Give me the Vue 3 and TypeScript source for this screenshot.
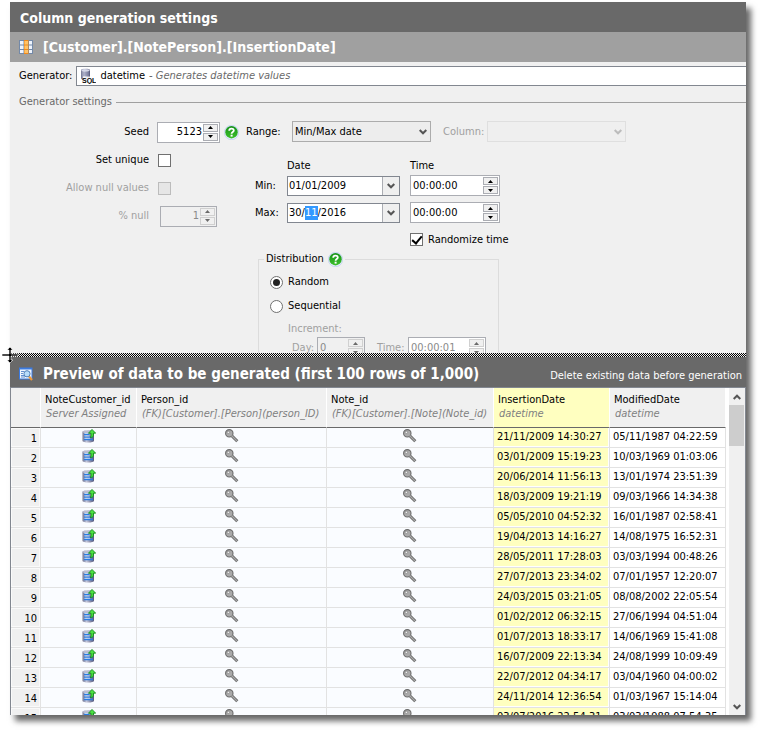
<script setup lang="ts">
import { onMounted, ref } from 'vue'

interface PreviewRow {
  inserted: string
  modified: string
}

interface Column {
  name: string
  type: string
  active?: boolean
}

const seed = ref('5123')
const nullPercent = ref('1')
const range = ref('Min/Max date')
const unique = ref(false)
const allowNull = ref(false)
const minDate = ref('01/01/2009')
const maxDate = ref('30/11/2016')
const minTime = ref('00:00:00')
const maxTime = ref('00:00:00')
const randomizeTime = ref(true)
const distribution = ref('random')
const maxDateInput = ref<HTMLInputElement | null>(null)

const columns: Column[] = [
  { name: 'NoteCustomer_id', type: 'Server Assigned' },
  { name: 'Person_id', type: '(FK)[Customer].[Person](person_ID)' },
  { name: 'Note_id', type: '(FK)[Customer].[Note](Note_id)' },
  { name: 'InsertionDate', type: 'datetime', active: true },
  { name: 'ModifiedDate', type: 'datetime' },
]

const rows: PreviewRow[] = [
  { inserted: '21/11/2009 14:30:27', modified: '05/11/1987 04:22:59' },
  { inserted: '03/01/2009 15:19:23', modified: '10/03/1969 01:03:06' },
  { inserted: '20/06/2014 11:56:13', modified: '13/01/1974 23:51:39' },
  { inserted: '18/03/2009 19:21:19', modified: '09/03/1966 14:34:38' },
  { inserted: '05/05/2010 04:52:32', modified: '16/01/1987 02:58:41' },
  { inserted: '19/04/2013 14:16:27', modified: '14/08/1975 16:52:31' },
  { inserted: '28/05/2011 17:28:03', modified: '03/03/1994 00:48:26' },
  { inserted: '27/07/2013 23:34:02', modified: '07/01/1957 12:20:07' },
  { inserted: '24/03/2015 03:21:05', modified: '08/08/2002 22:05:54' },
  { inserted: '01/02/2012 06:32:15', modified: '27/06/1994 04:51:04' },
  { inserted: '01/07/2013 18:33:17', modified: '14/06/1969 15:41:08' },
  { inserted: '16/07/2009 22:13:34', modified: '24/08/1999 10:09:49' },
  { inserted: '22/07/2012 04:34:17', modified: '03/04/1960 04:00:02' },
  { inserted: '24/11/2014 12:36:54', modified: '01/03/1967 15:14:04' },
  { inserted: '03/07/2016 22:54:31', modified: '03/03/1988 07:54:35' },
]

// The month part of the maximum date is the one being edited.
onMounted(() => {
  maxDateInput.value?.focus({ preventScroll: true })
  maxDateInput.value?.setSelectionRange(3, 5)
})
</script>

<template>
  <svg class="symbols" aria-hidden="true">
    <defs>
      <linearGradient id="drum" x1="0" x2="1" y1="0" y2="0">
        <stop offset="0" stop-color="#6f7391" />
        <stop offset="0.35" stop-color="#c3c6da" />
        <stop offset="1" stop-color="#55587a" />
      </linearGradient>
      <linearGradient id="green" x1="0" x2="0" y1="0" y2="1">
        <stop offset="0" stop-color="#17921a" />
        <stop offset="1" stop-color="#3cc02a" />
      </linearGradient>
    </defs>
    <symbol id="help" viewBox="0 0 15 15">
      <circle cx="7.5" cy="7.5" r="7.2" fill="#e4ecfb" stroke="#b4c8ee" stroke-width="0.6" />
      <circle cx="7.5" cy="7.2" r="6.2" fill="url(#green)" />
      <path d="M5.2 5.8C5.2 3 9.8 3 9.8 5.5C9.8 7.1 7.6 7 7.6 8.7" fill="none" stroke="#fff" stroke-width="1.8" />
      <rect x="6.6" y="9.7" width="2" height="1.9" fill="#fff" />
    </symbol>
    <symbol id="chevron" viewBox="0 0 8 6">
      <path d="M0.7 1L4 4.3L7.3 1" fill="none" stroke="currentColor" stroke-width="2" />
    </symbol>
    <symbol id="up" viewBox="0 0 5 3"><path d="M0 3L2.5 0L5 3Z" fill="currentColor" /></symbol>
    <symbol id="down" viewBox="0 0 5 3"><path d="M0 0L2.5 3L5 0Z" fill="currentColor" /></symbol>
    <symbol id="server" viewBox="0 0 14 14">
      <path d="M0.5 2.8C0.5 1 12 1 12 2.8V11.8C12 14.2 0.5 14.2 0.5 11.8Z" fill="url(#drum)" />
      <ellipse cx="6" cy="2.9" rx="5.2" ry="1.3" fill="#b9bdd2" />
      <path d="M2 5.5H7.5M2 8H11M2 10.5H11" stroke="#2a7be0" stroke-width="1.3" />
      <path d="M2.5 4.5H6.5M2.5 7H7.5M2.5 9.3H8" stroke="#cfe6ff" stroke-width="0.7" />
      <path d="M10 0.4L13.7 4.2H11.4V6.5C11.4 8.2 9.6 8.6 8 8.4C9 7.8 9 7.2 9 6.3V4.2H6.5Z" fill="#4ce043" stroke="#0f8716" stroke-width="0.8" />
    </symbol>
    <symbol id="key" viewBox="0 0 14 14">
      <path d="M6 6L12.3 12.3M9.5 11.2L11 9.8" fill="none" stroke="#666" stroke-width="3" />
      <circle cx="4.3" cy="4.3" r="3.7" fill="#aaa" stroke="#6c6c6c" stroke-width="1.1" />
      <path d="M6.5 6.5L12 12" stroke="#a9a9a9" stroke-width="1.3" />
      <circle cx="3.4" cy="3.4" r="1.2" fill="#eee" stroke="#777" stroke-width="0.6" />
    </symbol>
  </svg>

  <div class="page">
    <main class="window">
      <section class="pane">
        <header class="bar"><h1>Column generation settings</h1></header>
        <div class="bar sub">
          <svg class="bar-icon" viewBox="0 0 14 14" aria-hidden="true">
            <rect width="14" height="14" fill="#7389a8" />
            <path d="M1 1H4.5V4.5H1ZM1 5.5H4.5V9H1ZM1 10H4.5V13H1ZM10 1H13V4.5H10ZM10 5.5H13V9H10ZM10 10H13V13H10Z" fill="#eef3fc" />
            <path d="M5 0H9.5V14H5Z" fill="#f08a1c" />
            <path d="M5.5 1H9V4.5H5.5ZM5.5 5.5H9V9H5.5ZM5.5 10H9V13H5.5Z" fill="#ffc368" />
          </svg>
          <h2>[Customer].[NotePerson].[InsertionDate]</h2>
        </div>

        <form class="settings" @submit.prevent>
          <div class="generator">
            <label for="generator">Generator:</label>
            <button id="generator" type="button" class="generator-box" aria-haspopup="listbox">
              <svg class="sql-icon" viewBox="0 0 16 16" aria-hidden="true">
                <path d="M1 2.2C1 0.4 10 0.4 10 2.2V10.5C10 12.3 1 12.3 1 10.5Z" fill="url(#drum)" />
                <ellipse cx="5.5" cy="2.4" rx="4" ry="1.1" fill="#d5d7e8" />
                <path d="M3 5H9M3 7H9" stroke="#8a8eb0" stroke-width="0.7" />
                <rect x="3" y="8.5" width="13" height="7.5" fill="#fff" opacity="0.85" />
                <text x="2" y="15.4" class="sql-text">SQL</text>
              </svg>
              <span>datetime</span>
              <em>- Generates datetime values</em>
            </button>
          </div>

          <div class="group-title"><span>Generator settings</span></div>

          <div class="fields">
            <div class="left">
              <label for="seed">Seed</label>
              <div class="with-help">
                <div class="spin seed">
                  <input id="seed" v-model="seed" type="text" />
                  <div class="arrows">
                    <button type="button" aria-label="Increase seed"><svg><use href="#up" /></svg></button>
                    <button type="button" aria-label="Decrease seed"><svg><use href="#down" /></svg></button>
                  </div>
                </div>
                <svg class="help" aria-hidden="true"><use href="#help" /></svg>
              </div>
              <label for="unique">Set unique</label>
              <input id="unique" v-model="unique" type="checkbox" />
              <label for="allow-null" class="off">Allow null values</label>
              <input id="allow-null" v-model="allowNull" type="checkbox" disabled />
              <label for="null-percent" class="off">% null</label>
              <div class="spin percent disabled">
                <input id="null-percent" v-model="nullPercent" type="text" disabled />
                <div class="arrows">
                  <button type="button" disabled aria-label="Increase null percent"><svg><use href="#up" /></svg></button>
                  <button type="button" disabled aria-label="Decrease null percent"><svg><use href="#down" /></svg></button>
                </div>
              </div>
            </div>

            <div class="right">
              <div class="range">
                <label for="range">Range:</label>
                <div class="select">
                  <select id="range" v-model="range"><option>Min/Max date</option></select>
                  <svg><use href="#chevron" /></svg>
                </div>
                <label for="column" class="off">Column:</label>
                <div class="select disabled">
                  <select id="column" disabled><option></option></select>
                  <svg><use href="#chevron" /></svg>
                </div>
              </div>

              <div class="limits">
                <span class="date-head">Date</span>
                <span>Time</span>
                <label for="min-date">Min:</label>
                <div class="date">
                  <input id="min-date" v-model="minDate" type="text" />
                  <button type="button" aria-label="Pick minimum date"><svg><use href="#chevron" /></svg></button>
                </div>
                <div class="spin time">
                  <input v-model="minTime" type="text" aria-label="Minimum time" />
                  <div class="arrows">
                    <button type="button" aria-label="Later minimum time"><svg><use href="#up" /></svg></button>
                    <button type="button" aria-label="Earlier minimum time"><svg><use href="#down" /></svg></button>
                  </div>
                </div>
                <label for="max-date">Max:</label>
                <div class="date">
                  <input id="max-date" ref="maxDateInput" v-model="maxDate" type="text" />
                  <button type="button" aria-label="Pick maximum date"><svg><use href="#chevron" /></svg></button>
                </div>
                <div class="spin time">
                  <input v-model="maxTime" type="text" aria-label="Maximum time" />
                  <div class="arrows">
                    <button type="button" aria-label="Later maximum time"><svg><use href="#up" /></svg></button>
                    <button type="button" aria-label="Earlier maximum time"><svg><use href="#down" /></svg></button>
                  </div>
                </div>
                <label class="choice randomize">
                  <input v-model="randomizeTime" type="checkbox" />
                  <span>Randomize time</span>
                </label>
              </div>

              <fieldset>
                <legend>
                  <span>Distribution</span>
                  <svg class="help" aria-hidden="true"><use href="#help" /></svg>
                </legend>
                <label class="choice">
                  <input v-model="distribution" type="radio" name="distribution" value="random" />
                  <span>Random</span>
                </label>
                <label class="choice">
                  <input v-model="distribution" type="radio" name="distribution" value="sequential" />
                  <span>Sequential</span>
                </label>
                <div class="increment off">Increment:</div>
                <div class="increment-row off">
                  <label for="day">Day:</label>
                  <div class="spin day disabled">
                    <input id="day" type="text" value="0" disabled />
                    <div class="arrows">
                      <button type="button" disabled aria-label="More days"><svg><use href="#up" /></svg></button>
                      <button type="button" disabled aria-label="Fewer days"><svg><use href="#down" /></svg></button>
                    </div>
                  </div>
                  <label for="step-time">Time:</label>
                  <div class="spin step disabled">
                    <input id="step-time" type="text" value="00:00:01" disabled />
                    <div class="arrows">
                      <button type="button" disabled aria-label="More time"><svg><use href="#up" /></svg></button>
                      <button type="button" disabled aria-label="Less time"><svg><use href="#down" /></svg></button>
                    </div>
                  </div>
                </div>
              </fieldset>
            </div>
          </div>
        </form>
      </section>

      <section class="pane">
        <div class="splitter" role="separator">
          <svg class="resize" viewBox="0 0 17 17" aria-hidden="true">
            <path d="M8 0L11 3H9V7H16V9H9V13H11L8 16L5 13H7V9H0V7H7V3H5Z" fill="#000" stroke="#fff" stroke-width="0.6" />
          </svg>
        </div>
        <header class="bar preview">
          <svg class="bar-icon" viewBox="0 0 14 14" aria-hidden="true">
            <rect width="13.5" height="12" y="0.5" fill="#3c7be0" />
            <rect x="1" y="2.5" width="11.5" height="9" fill="#eef5ff" />
            <path d="M2 4.5H5M2 6.5H4M2 8.5H5M2 10H6" stroke="#6590cf" stroke-width="1" />
            <path d="M10 9.5L13 13" stroke="#ef9a38" stroke-width="2.2" />
            <circle cx="8" cy="6.8" r="3.1" fill="#b8dcfa" stroke="#4e7fb8" stroke-width="1" />
          </svg>
          <h2>Preview of data to be generated (first 100 rows of 1,000)</h2>
          <button type="button" class="delete">Delete existing data before generation</button>
        </header>

        <div class="grid">
          <div class="table-area">
            <table>
              <colgroup>
                <col class="c-num" /><col class="c-note" /><col class="c-person" />
                <col class="c-id" /><col class="c-date" /><col class="c-date" />
              </colgroup>
              <thead>
                <tr>
                  <td></td>
                  <th v-for="column in columns" :key="column.name" scope="col" :class="{ active: column.active }">
                    {{ column.name }}<em>{{ column.type }}</em>
                  </th>
                </tr>
              </thead>
              <tbody>
                <tr v-for="(row, index) in rows" :key="index">
                  <th scope="row">{{ index + 1 }}</th>
                  <td class="auto"><svg aria-label="Server assigned"><use href="#server" /></svg></td>
                  <td class="auto"><svg aria-label="Foreign key"><use href="#key" /></svg></td>
                  <td class="auto"><svg aria-label="Foreign key"><use href="#key" /></svg></td>
                  <td class="active">{{ row.inserted }}</td>
                  <td>{{ row.modified }}</td>
                </tr>
              </tbody>
            </table>
          </div>
          <div class="scroll">
            <button type="button" aria-label="Scroll up"><svg class="flip"><use href="#chevron" /></svg></button>
            <div class="track"><div class="thumb"></div></div>
            <button type="button" aria-label="Scroll down"><svg><use href="#chevron" /></svg></button>
          </div>
        </div>
      </section>
    </main>
  </div>
</template>

<style>
body {
  background: #fff;
}
</style>

<style scoped>
* {
  box-sizing: border-box;
}

.symbols {
  position: absolute;
  width: 0;
  height: 0;
}

.page {
  height: 100vh;
  padding: 2px 14px 15px 10px;
  overflow: hidden;
}

.window {
  display: grid;
  grid-template-rows: minmax(0, 351fr) minmax(0, 362fr);
  height: 100%;
  background: #f0f0f0;
  box-shadow: 5px 6px 6px rgba(0, 0, 0, 0.6);
  color: #000;
  font: 11px/14px "DejaVu Sans Condensed", "Noto Sans", sans-serif;
}

.pane {
  display: flex;
  flex-direction: column;
  min-height: 0;
}

.pane:first-child {
  overflow: hidden;
}

button,
input,
select {
  margin: 0;
  padding: 0;
  border: 0;
  border-radius: 0;
  background: none;
  color: inherit;
  font: inherit;
  outline: none;
}

.bar {
  display: flex;
  flex: none;
  align-items: center;
  gap: 10px;
  height: 30px;
  padding: 2px 4px 0 10px;
  background: #696969;
  color: #fff;
}

.bar.sub {
  padding-top: 0;
  padding-left: 9px;
  background: #a0a0a0;
}

.bar.preview {
  padding-top: 4px;
  padding-left: 9px;
}

.bar h1,
.bar h2 {
  margin: 0;
  font-size: 14px;
  font-weight: bold;
  line-height: 20px;
  white-space: nowrap;
}

.bar.preview h2 {
  font-size: 15px;
}

.bar-icon {
  flex: none;
  width: 14px;
  height: 14px;
}

.delete {
  margin-left: auto;
  padding-top: 4px;
  white-space: nowrap;
}

.settings {
  padding-top: 4px;
}

.generator {
  display: flex;
  align-items: center;
  gap: 4px;
  padding-left: 9px;
}

.generator-box {
  display: flex;
  flex: 1;
  align-items: center;
  gap: 4px;
  height: 20px;
  padding-left: 3px;
  border: 1px solid #828790;
  border-right: 0;
  background: #fff;
  white-space: pre;
}

.generator-box em {
  color: #696969;
}

.sql-icon {
  width: 16px;
  height: 16px;
}

.sql-text {
  font: bold 7px "Liberation Sans", sans-serif;
}

.group-title {
  display: flex;
  align-items: center;
  gap: 4px;
  margin: 9px 0 12px;
  padding-left: 9px;
  color: #696969;
}

.group-title::after {
  flex: 1;
  height: 1px;
  background: #a0a0a0;
  content: "";
}

.fields {
  display: flex;
}

.left {
  display: grid;
  flex: none;
  grid-template-columns: 139px 89px;
  grid-auto-rows: 28px;
  align-items: center;
  align-self: flex-start;
  column-gap: 8px;
  margin-top: -3px;
}

.left label {
  text-align: right;
}

.left > input[type="checkbox"] {
  margin-left: 1px;
}

.with-help {
  display: flex;
  align-items: center;
  gap: 4px;
}

.help {
  flex: none;
  width: 15px;
  height: 15px;
}

.off {
  color: #a0a0a0;
}

.spin {
  display: flex;
  height: 21px;
  padding: 1px;
  border: 1px solid #abadb3;
  background: #fff;
}

.spin input {
  flex: 1;
  width: 0;
  padding-left: 1px;
}

.spin.disabled {
  background: #f0f0f0;
  color: #8a8a8a;
}

.spin.step {
  background: #fff;
}

.arrows {
  display: grid;
  flex: none;
  grid-template-rows: 8px 8px;
  gap: 1px;
  width: 15px;
}

.arrows button {
  display: grid;
  place-items: center;
  border: 1px solid #abadb3;
  background: #f0f0f0;
}

.arrows svg {
  width: 5px;
  height: 3px;
}

.disabled .arrows button {
  border-color: #d0d0d0;
  color: #6a6a6a;
}

.seed {
  width: 63px;
}

.percent {
  width: 57px;
  margin-left: 3px;
}

.seed input,
.percent input {
  padding-right: 1px;
  text-align: right;
}

input[type="checkbox"],
input[type="radio"] {
  display: grid;
  flex: none;
  place-items: center;
  width: 13px;
  height: 13px;
  border: 1px solid #707070;
  appearance: none;
  background: #fff;
}

input[type="checkbox"]:disabled {
  border-color: #bcbcbc;
  background: #e6e6e6;
}

input[type="checkbox"]:checked::after {
  width: 4px;
  height: 8px;
  margin-bottom: 2px;
  border: solid #000;
  border-width: 0 2px 2px 0;
  content: "";
  transform: rotate(40deg);
}

input[type="radio"] {
  border-radius: 50%;
}

input[type="radio"]:checked::after {
  width: 7px;
  height: 7px;
  border-radius: 50%;
  background: #222;
  content: "";
}

.range {
  display: flex;
  align-items: center;
}

.range label {
  width: 46px;
}

.range .off {
  width: 44px;
  margin-left: 12px;
}

.select {
  position: relative;
  width: 139px;
  height: 21px;
}

.select select {
  width: 100%;
  height: 100%;
  padding: 0 20px 0 2px;
  border: 1px solid #acacac;
  appearance: none;
  background: #ededed;
}

.select svg {
  position: absolute;
  top: 8px;
  right: 4px;
  width: 8px;
  height: 6px;
  color: #555;
  pointer-events: none;
}

.select.disabled select {
  border-color: #d9d9d9;
  background: #efefef;
}

.select.disabled svg {
  color: #bcbcbc;
}

.limits {
  display: grid;
  grid-template-columns: 32px 113px 90px;
  grid-auto-rows: 21px;
  align-items: center;
  gap: 6px 0;
  margin-top: 6px;
  padding-left: 9px;
}

.date-head {
  grid-column: 2;
}

.limits > span {
  align-self: end;
  margin-bottom: -4px;
}

.limits > span + span,
.limits .time,
.limits .randomize {
  margin-left: 10px;
}

.limits .time {
  width: 90px;
}

.limits .randomize {
  grid-column: 3;
}

.date {
  display: flex;
  height: 20px;
  border: 1px solid #828790;
  background: #fff;
}

.date input {
  flex: 1;
  width: 0;
  padding-left: 1px;
}

.date input::selection {
  background: #3399ff;
  color: #fff;
}

.date button {
  display: grid;
  place-items: center;
  width: 17px;
  border-left: 1px solid #abadb3;
  background: #efefef;
  color: #555;
}

.date svg {
  width: 8px;
  height: 6px;
}

.choice {
  display: flex;
  align-items: center;
  gap: 5px;
  white-space: nowrap;
}

fieldset {
  width: 241px;
  margin: 2px 0 0 12px;
  padding: 3px 10px 0 11px;
  border: 1px solid #dcdcdc;
}

legend {
  display: flex;
  gap: 4px;
  margin-left: -6px;
  padding: 0 2px;
}

fieldset .choice {
  height: 24px;
}

.increment {
  padding: 4px 0 1px 18px;
}

.increment-row {
  display: flex;
  align-items: center;
  padding-left: 22px;
}

.increment-row label:first-child {
  width: 25px;
}

.increment-row label {
  width: 31px;
}

.day {
  width: 48px;
  margin-right: 12px;
}

.step {
  width: 78px;
}

.splitter {
  position: relative;
  flex: none;
  height: 4px;
  background: conic-gradient(#000 25%, #f0f0f0 0 50%, #000 0 75%, #f0f0f0 0) 0 0 / 2px 2px;
}

.resize {
  position: absolute;
  top: -6px;
  left: -8px;
  width: 17px;
  height: 17px;
}

.grid {
  display: flex;
  flex: 1;
  min-height: 0;
  border: 1px solid #828790;
  border-width: 1px 1px 0;
  background: #fff;
}

.table-area {
  flex: 1;
  min-width: 0;
  overflow: hidden;
}

table {
  width: 715px;
  border-spacing: 0;
  table-layout: fixed;
}

.c-num {
  width: 30px;
}

.c-note {
  width: 96px;
}

.c-person {
  width: 190px;
}

.c-id {
  width: 167px;
}

.c-date {
  width: 116px;
}

thead th,
thead td {
  height: 40px;
  padding: 0 0 1px 4px;
  border-right: 1px solid #fff;
  border-bottom: 1px solid #696969;
  background: #f0f0f0;
  font-weight: normal;
  text-align: left;
  white-space: nowrap;
}

thead em {
  display: block;
  padding-left: 1px;
  color: #808080;
}

thead .active {
  background: #ffffc0;
}

tbody td,
tbody th {
  height: 20px;
  padding: 2px 0 3px 3px;
  border-right: 1px solid #e2e2e2;
  border-bottom: 1px solid #e2e2e2;
  line-height: 14px;
  white-space: nowrap;
}

tbody th {
  padding: 4px 3px 1px 0;
  background: #f0f0f0;
  box-shadow: inset 0 0 0 1px #fafafa;
  font-weight: normal;
  text-align: right;
}

tbody .active {
  background: #ffffc0;
  box-shadow: inset -1px -1px #fff;
}

tbody .auto {
  padding: 1px 0 4px;
  background: #fafcff;
  text-align: center;
}

tbody svg {
  display: block;
  width: 14px;
  height: 14px;
  margin: 0 auto;
}

.scroll {
  display: flex;
  flex: none;
  flex-direction: column;
  width: 16px;
  background: #f0f0f0;
}

.scroll button {
  display: grid;
  place-items: center;
  height: 17px;
}

.scroll svg {
  width: 8px;
  height: 6px;
  color: #555;
}

.scroll .flip {
  transform: rotate(180deg);
}

.track {
  flex: 1;
}

.thumb {
  height: 41px;
  margin-right: 1px;
  background: #cdcdcd;
}
</style>
